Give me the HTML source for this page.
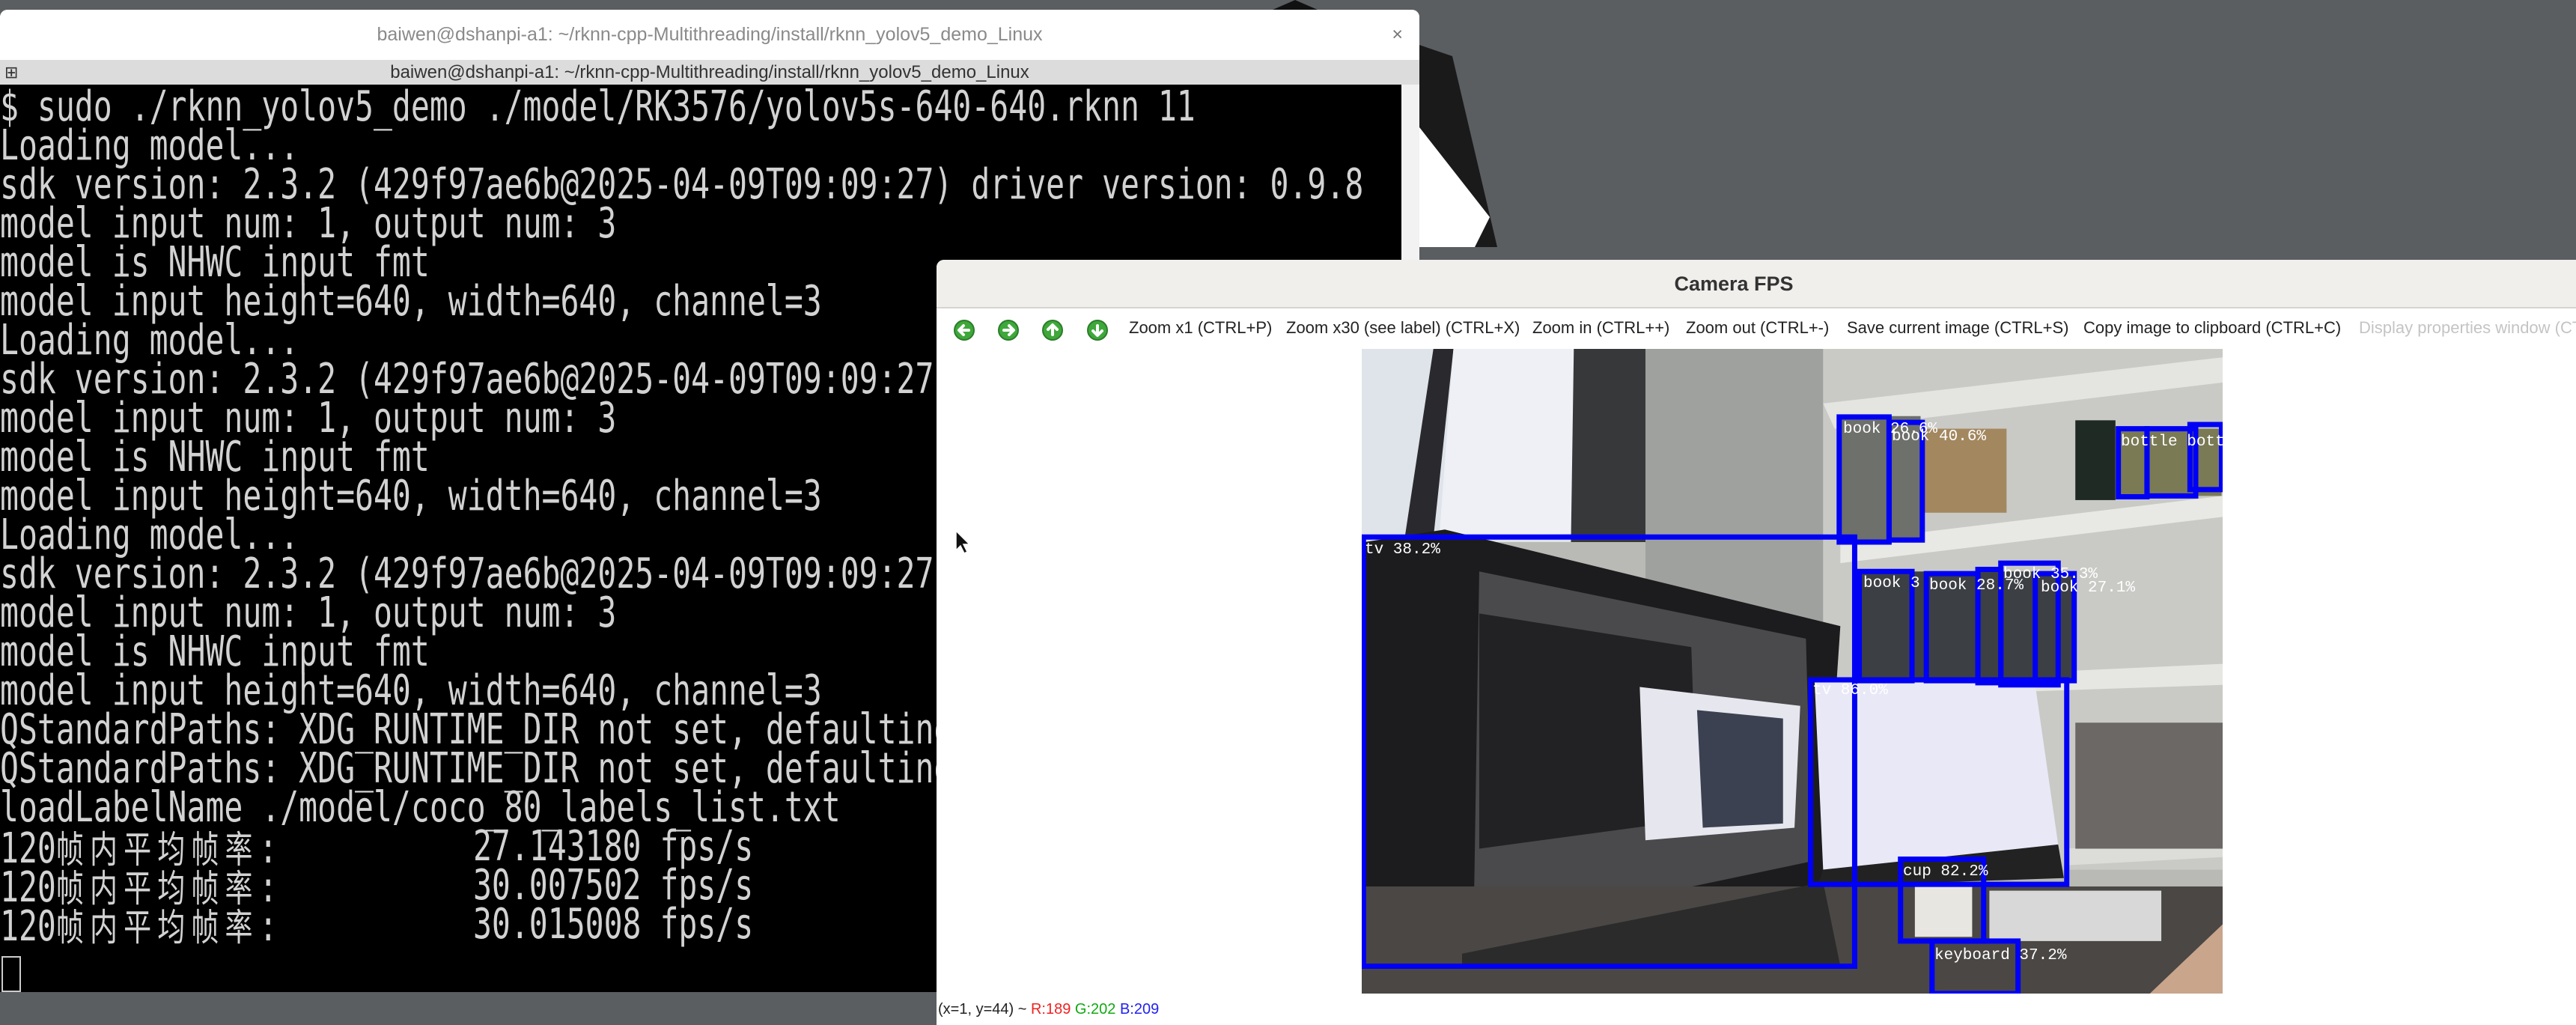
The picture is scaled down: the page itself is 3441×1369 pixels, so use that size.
<!DOCTYPE html>
<html><head><meta charset="utf-8"><style>
*{margin:0;padding:0;box-sizing:border-box}
html,body{width:3441px;height:1369px;overflow:hidden;background:#5a5e61;font-family:"Liberation Sans","Noto Sans CJK SC",sans-serif}
.abs{position:absolute}
#term{left:0;top:13px;width:1896px;height:1312px;background:#f2f2f2;border-radius:10px 10px 0 0;overflow:hidden}
#t1{left:0;top:0;width:1896px;height:67px;background:#fff;color:#8a8a8a;font-size:25px;text-align:center;line-height:67px}
#t2{left:0;top:67px;width:1896px;height:33px;background:#dcdcdc;color:#333;font-size:24px;text-align:center;line-height:33px}
#blk{left:0;top:100px;width:1872px;height:1212px;background:#000}
.ln{position:absolute;left:0;white-space:pre;font-family:"DejaVu Sans Mono","Liberation Mono","Noto Sans CJK SC",monospace;font-size:56px;line-height:52px;color:#d2d2d2;transform:scaleX(0.74);transform-origin:0 0}
.cj{letter-spacing:11px;font-family:"Noto Sans CJK SC",sans-serif;font-size:50px}
#cam{left:1251px;top:347px;width:2190px;height:1022px;background:#fff;border-radius:10px 0 0 0;overflow:hidden}
#ct{left:0;top:0;width:2190px;height:65px;background:#f1efec;border-bottom:2px solid #d6d4d0;text-align:center;font-weight:bold;font-size:27px;color:#333;line-height:65px;padding-right:60px}
.tb{position:absolute;top:78px;font-size:22px;color:#222;white-space:nowrap}
.ic{position:absolute;top:79px}
.lb{position:absolute;font-family:"Liberation Mono",monospace;font-size:21px;color:#fff;white-space:nowrap;line-height:21px}
</style></head><body>
<svg class="abs" style="left:0;top:0" width="3441" height="1369">
<polygon points="1700,13 1730,0 1760,13" fill="#111"/>
<polygon points="1896,60 1940,75 2000,330 1896,330" fill="#1a1a1a"/>
<polygon points="1896,170 1990,290 1970,330 1896,330" fill="#fff"/>
</svg>
<div id="term" class="abs">
<div id="t1" class="abs">baiwen@dshanpi-a1: ~/rknn-cpp-Multithreading/install/rknn_yolov5_demo_Linux<span style="position:absolute;right:22px;top:0;color:#777">×</span></div>
<div id="t2" class="abs"><span style="position:absolute;left:6px;top:0;font-size:22px">⊞</span>baiwen@dshanpi-a1: ~/rknn-cpp-Multithreading/install/rknn_yolov5_demo_Linux</div>
<div id="blk" class="abs">
<div class="ln" style="top:4px">$ sudo ./rknn_yolov5_demo ./model/RK3576/yolov5s-640-640.rknn 11</div>
<div class="ln" style="top:56px">Loading model...</div>
<div class="ln" style="top:108px">sdk version: 2.3.2 (429f97ae6b@2025-04-09T09:09:27) driver version: 0.9.8</div>
<div class="ln" style="top:160px">model input num: 1, output num: 3</div>
<div class="ln" style="top:212px">model is NHWC input fmt</div>
<div class="ln" style="top:264px">model input height=640, width=640, channel=3</div>
<div class="ln" style="top:316px">Loading model...</div>
<div class="ln" style="top:368px">sdk version: 2.3.2 (429f97ae6b@2025-04-09T09:09:27) driver version: 0.9.8</div>
<div class="ln" style="top:420px">model input num: 1, output num: 3</div>
<div class="ln" style="top:472px">model is NHWC input fmt</div>
<div class="ln" style="top:524px">model input height=640, width=640, channel=3</div>
<div class="ln" style="top:576px">Loading model...</div>
<div class="ln" style="top:628px">sdk version: 2.3.2 (429f97ae6b@2025-04-09T09:09:27) driver version: 0.9.8</div>
<div class="ln" style="top:680px">model input num: 1, output num: 3</div>
<div class="ln" style="top:732px">model is NHWC input fmt</div>
<div class="ln" style="top:784px">model input height=640, width=640, channel=3</div>
<div class="ln" style="top:836px">QStandardPaths: XDG_RUNTIME_DIR not set, defaulting to '/tmp/runtime-root'</div>
<div class="ln" style="top:888px">QStandardPaths: XDG_RUNTIME_DIR not set, defaulting to '/tmp/runtime-root'</div>
<div class="ln" style="top:940px">loadLabelName ./model/coco_80_labels_list.txt</div>
<div class="ln" style="top:992px;width:2400px">120<span class="cj">帧内平均帧率</span>:<span style="position:absolute;left:854px">27.143180 fps/s</span></div>
<div class="ln" style="top:1044px;width:2400px">120<span class="cj">帧内平均帧率</span>:<span style="position:absolute;left:854px">30.007502 fps/s</span></div>
<div class="ln" style="top:1096px;width:2400px">120<span class="cj">帧内平均帧率</span>:<span style="position:absolute;left:854px">30.015008 fps/s</span></div>
<div class="abs" style="left:2px;top:1164px;width:26px;height:48px;border:2px solid #ccc"></div>
</div>
</div>

<div id="cam" class="abs">
<div id="ct" class="abs">Camera FPS</div>
<svg class="ic" style="left:22px" width="30" height="30" viewBox="0 0 30 30"><circle cx="15" cy="15" r="13" fill="#3ea83a" stroke="#2c7d2a" stroke-width="2"/><path d="M21 15 H10 M14 9 L8 15 L14 21" stroke="#fff" stroke-width="4" fill="none" stroke-linecap="round" stroke-linejoin="round"/></svg>
<svg class="ic" style="left:81px" width="30" height="30" viewBox="0 0 30 30"><circle cx="15" cy="15" r="13" fill="#3ea83a" stroke="#2c7d2a" stroke-width="2"/><path d="M9 15 H20 M16 9 L22 15 L16 21" stroke="#fff" stroke-width="4" fill="none" stroke-linecap="round" stroke-linejoin="round"/></svg>
<svg class="ic" style="left:140px" width="30" height="30" viewBox="0 0 30 30"><circle cx="15" cy="15" r="13" fill="#3ea83a" stroke="#2c7d2a" stroke-width="2"/><path d="M15 21 V10 M9 14 L15 8 L21 14" stroke="#fff" stroke-width="4" fill="none" stroke-linecap="round" stroke-linejoin="round"/></svg>
<svg class="ic" style="left:200px" width="30" height="30" viewBox="0 0 30 30"><circle cx="15" cy="15" r="13" fill="#3ea83a" stroke="#2c7d2a" stroke-width="2"/><path d="M15 9 V20 M9 16 L15 22 L21 16" stroke="#fff" stroke-width="4" fill="none" stroke-linecap="round" stroke-linejoin="round"/></svg>
<div class="tb" style="left:257px">Zoom x1 (CTRL+P)</div>
<div class="tb" style="left:467px">Zoom x30 (see label) (CTRL+X)</div>
<div class="tb" style="left:796px">Zoom in (CTRL++)</div>
<div class="tb" style="left:1001px">Zoom out (CTRL+-)</div>
<div class="tb" style="left:1216px">Save current image (CTRL+S)</div>
<div class="tb" style="left:1532px">Copy image to clipboard (CTRL+C)</div>
<div class="tb" style="left:1900px;color:#c4c4c4">Display properties window (CTRL+P)</div>
<div class="tb" style="left:2px;top:990px;font-size:20px">(x=1, y=44) ~ <span style="color:#e22">R:189</span> <span style="color:#1a1">G:202</span> <span style="color:#22e">B:209</span></div>
<svg class="abs" style="left:24px;top:360px" width="22" height="34"><path d="M2 2 L2 28 L8 22 L13 32 L17 30 L12 20 L20 20 Z" fill="#111" stroke="#fff" stroke-width="1.5"/></svg>
</div>

<svg class="abs" style="left:1819px;top:466px" width="1150" height="861" viewBox="25 10 1502 1535" preserveAspectRatio="none">
<rect x="25" y="10" width="1502" height="1535" fill="#b9bab5"/>
<rect x="25" y="10" width="500" height="460" fill="#dfe3ea"/>
<polygon points="150,10 185,10 150,460 100,460" fill="#2a2a2e"/>
<polygon points="185,10 395,10 390,450 160,460" fill="#eef0f6"/>
<polygon points="395,10 520,10 520,470 390,470" fill="#37383a"/>
<rect x="520" y="10" width="310" height="800" fill="#9ea19d"/>
<rect x="830" y="10" width="697" height="1240" fill="#c9cac5"/>
<polygon points="830,140 1527,30 1527,90 850,200" fill="#e4e4e0"/>
<polygon points="860,470 1527,360 1527,410 860,520" fill="#e8e8e4"/>
<polygon points="880,800 1527,760 1527,810 880,840" fill="#e6e6e2"/>
<polygon points="1250,1200 1527,1180 1527,1220 1250,1240" fill="#dcdcd8"/>
<rect x="860" y="170" width="140" height="300" fill="#6d706b"/>
<rect x="1000" y="200" width="150" height="200" fill="#a3875f"/>
<rect x="1270" y="180" width="70" height="190" fill="#1f2a25"/>
<rect x="1345" y="200" width="180" height="160" fill="#7a7a55"/>
<rect x="890" y="540" width="380" height="260" fill="#3c3f44"/>
<rect x="1270" y="900" width="257" height="300" fill="#6b6866"/>
<polygon points="30,470 170,440 860,670 830,1280 600,1350 200,1450 30,1480" fill="#1c1c1e"/>
<polygon points="230,540 800,700 810,1230 220,1400" fill="#4a4a4d"/>
<polygon points="230,640 600,720 610,1130 230,1200" fill="#222224"/>
<polygon points="510,815 790,860 780,1150 520,1180" fill="#e6e6ee"/>
<polygon points="610,870 760,890 760,1140 620,1150" fill="#3b4150"/>
<polygon points="815,800 1200,810 1240,1190 830,1250" fill="#e8e8f7"/>
<polygon points="830,1250 1240,1190 1250,1270 820,1290" fill="#222"/>
<rect x="25" y="1290" width="1502" height="255" fill="#4a4745"/>
<polygon points="200,1450 830,1280 860,1480 200,1480" fill="#2b2b2b"/>
<rect x="1120" y="1300" width="300" height="120" fill="#d8d8d8"/>
<rect x="990" y="1290" width="100" height="120" fill="#e8e6e0"/>
<polygon points="1400,1545 1527,1380 1527,1545" fill="#c9a58c"/>
<g fill="none" stroke="#0000f5" stroke-width="7">
<rect x="28" y="458" width="857" height="1022" vector-effect="non-scaling-stroke"/>
<rect x="858" y="172" width="87" height="298" vector-effect="non-scaling-stroke"/>
<rect x="945" y="185" width="58" height="280" vector-effect="non-scaling-stroke"/>
<rect x="1345" y="200" width="50" height="162" vector-effect="non-scaling-stroke"/>
<rect x="1395" y="200" width="85" height="160" vector-effect="non-scaling-stroke"/>
<rect x="1470" y="190" width="55" height="155" vector-effect="non-scaling-stroke"/>
<rect x="893" y="540" width="92" height="260" vector-effect="non-scaling-stroke"/>
<rect x="1010" y="545" width="90" height="255" vector-effect="non-scaling-stroke"/>
<rect x="1100" y="535" width="40" height="270" vector-effect="non-scaling-stroke"/>
<rect x="1140" y="520" width="100" height="290" vector-effect="non-scaling-stroke"/>
<rect x="1200" y="545" width="68" height="255" vector-effect="non-scaling-stroke"/>
<rect x="808" y="798" width="447" height="487" vector-effect="non-scaling-stroke"/>
<rect x="965" y="1225" width="145" height="195" vector-effect="non-scaling-stroke"/>
<rect x="1020" y="1420" width="150" height="125" vector-effect="non-scaling-stroke"/>
</g>
</svg>
<div class="lb" style="left:1823px;top:724px">tv 38.2%</div>
<div class="lb" style="left:2462px;top:563px">book 26.6%</div>
<div class="lb" style="left:2527px;top:573px">book 40.6%</div>
<div class="lb" style="left:2833px;top:580px">bottle bottle 56%</div>
<div class="lb" style="left:2489px;top:769px">book 3</div>
<div class="lb" style="left:2577px;top:772px">book 28.7%</div>
<div class="lb" style="left:2676px;top:757px">book 35.3%</div>
<div class="lb" style="left:2726px;top:775px">book 27.1%</div>
<div class="lb" style="left:2421px;top:912px">tv 86.0%</div>
<div class="lb" style="left:2542px;top:1154px">cup 82.2%</div>
<div class="lb" style="left:2584px;top:1266px">keyboard 37.2%</div>
</body></html>
